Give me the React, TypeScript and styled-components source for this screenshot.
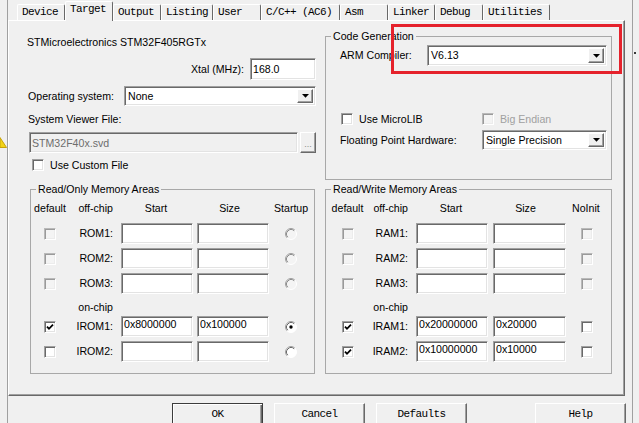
import React from "react";
import styled, { createGlobalStyle, css } from "styled-components";

const GlobalStyle = createGlobalStyle`
  *, *::before, *::after { box-sizing: border-box; }
  html, body { margin: 0; padding: 0; background: #f0f0f0; }
  body {
    font-family: "Liberation Sans", Arial, sans-serif;
    font-size: 10.6px;
    line-height: 13px;
    color: #000;
  }
`;

const sunken = css`
  border: 1px solid;
  border-color: #a0a0a0 #ffffff #ffffff #a0a0a0;
  box-shadow: inset 1px 1px 0 #696969, inset -1px -1px 0 #e3e3e3;
`;

const raised = css`
  border: 1px solid;
  border-color: #ffffff #696969 #696969 #ffffff;
  box-shadow: inset -1px -1px 0 #a0a0a0;
`;

const monoFace = css`
  font-family: "Liberation Mono", "Courier New", monospace;
  font-size: 11px;
  letter-spacing: -0.6px;
`;

const Screen = styled.div`
  position: relative;
  width: 639px;
  height: 423px;
  overflow: hidden;
  display: flex;
  background: #f0f0f0;
`;

const ParentEdge = styled.div`
  width: 7px;
  flex: none;
  padding-top: 137px;
  overflow: hidden;
`;

const Dialog = styled.div`
  width: 626px;
  flex: none;
  display: flex;
  flex-direction: column;
  border-left: 1px solid #a0a0a0;
  border-right: 1px solid #a0a0a0;
`;

const OuterStrip = styled.div`
  flex: 1;
  padding: 52px 0 0 1px;
`;

const Speck = styled.div`
  width: 2px;
  height: 2px;
  background: #3a3a3a;
`;

const TabStrip = styled.div`
  display: flex;
  align-items: flex-start;
  height: 20px;
  padding-left: 9px;
  position: relative;
  z-index: 2;
`;

const Tab = styled.div<{ $active?: boolean; $w: number }>`
  ${monoFace}
  flex: none;
  width: ${(p) => p.$w}px;
  height: 16px;
  margin-top: 4px;
  padding: 1px 0 0 4px;
  line-height: 13px;
  white-space: pre;
  border-top: 1px solid #ffffff;
  border-left: 1px solid #ffffff;
  border-right: 1px solid #696969;
  border-radius: 2px 2px 0 0;
  background: #f0f0f0;
  ${(p) =>
    p.$active &&
    css`
      margin-top: 1px;
      height: 20px;
    `}
`;

const Panel = styled.div`
  width: 617px;
  height: 376px;
  flex: none;
  display: flex;
  align-items: flex-start;
  gap: 9px;
  padding-left: 18px;
  border-top: 1px solid #ffffff;
  border-left: 1px solid #ffffff;
  border-right: 1px solid #696969;
  border-bottom: 1px solid #696969;
  box-shadow: inset -1px -1px 0 #a0a0a0;
`;

const Column = styled.div<{ $w: number }>`
  width: ${(p) => p.$w}px;
  flex: none;
  display: flex;
  flex-direction: column;
`;

const DeviceName = styled.div`
  margin-top: 15px;
  white-space: nowrap;
`;

const XtalRow = styled.div`
  margin-top: 9px;
  height: 22px;
  display: flex;
  justify-content: flex-end;
  align-items: center;
  gap: 6px;
`;

const LineRow = styled.div<{ $mt: number; $h: number; $pl?: number }>`
  margin-top: ${(p) => p.$mt}px;
  height: ${(p) => p.$h}px;
  padding-left: ${(p) => p.$pl ?? 0}px;
  display: flex;
  align-items: center;
`;

const FieldLabel = styled.span<{ $w?: number }>`
  flex: none;
  width: ${(p) => (p.$w ? `${p.$w}px` : "auto")};
  white-space: nowrap;
`;

const Caption = styled.div<{ $mt: number }>`
  margin-top: ${(p) => p.$mt}px;
  padding-left: 1px;
  white-space: nowrap;
`;

const Edit = styled.input<{ $w?: number; $h: number; $top?: boolean; $disabled?: boolean }>`
  ${sunken}
  width: ${(p) => (p.$w ? `${p.$w}px` : "auto")};
  ${(p) => !p.$w && "flex: 1; min-width: 0;"}
  height: ${(p) => p.$h}px;
  margin: 0;
  padding: ${(p) => (p.$top ? "0 2px 6px 2px" : "0 2px")};
  font: inherit;
  line-height: 13px;
  color: ${(p) => (p.$disabled ? "#6d6d6d" : "#000")};
  background: ${(p) => (p.$disabled ? "#f0f0f0" : "#ffffff")};
  outline: none;
`;

const BrowseBtn = styled.span`
  ${raised}
  flex: none;
  width: 16px;
  height: 21px;
  margin-left: 2px;
  display: flex;
  align-items: flex-end;
  justify-content: center;
  padding-bottom: 3px;
  font-size: 9px;
  line-height: 9px;
  color: #8a8a8a;
  background: #f0f0f0;
`;

const Combo = styled.div<{ $h: number }>`
  ${sunken}
  flex: 1;
  min-width: 0;
  height: ${(p) => p.$h}px;
  display: flex;
  align-items: stretch;
  padding: 2px 2px 2px 3px;
  background: #ffffff;
`;

const ComboValue = styled.span`
  flex: 1;
  display: flex;
  align-items: center;
  white-space: nowrap;
`;

const DropButton = styled.span`
  ${raised}
  flex: none;
  width: 16px;
  display: flex;
  align-items: center;
  justify-content: center;
  background: #f0f0f0;
`;

const CheckLabel = styled.span<{ $disabled?: boolean }>`
  white-space: nowrap;
  color: ${(p) => (p.$disabled ? "#a0a0a0" : "#000")};
`;

const Box = styled.span<{ $disabled?: boolean }>`
  ${sunken}
  flex: none;
  width: 12px;
  height: 12px;
  display: inline-flex;
  align-items: center;
  justify-content: center;
  background: ${(p) => (p.$disabled ? "#f4f4f4" : "#ffffff")};
  ${(p) =>
    p.$disabled &&
    css`
      border-color: #b9b9b9 #ffffff #ffffff #b9b9b9;
      box-shadow: inset 1px 1px 0 #9a9a9a, inset -1px -1px 0 #ececec;
    `}
`;

const Group = styled.fieldset<{ $mt: number; $ml?: number; $w: number }>`
  margin: ${(p) => p.$mt}px 0 0 ${(p) => p.$ml ?? 0}px;
  width: ${(p) => p.$w}px;
  min-width: 0;
  padding: 0;
  border: 1px solid #a8a8a8;
`;

const GroupTitle = styled.legend`
  margin-left: 5px;
  padding: 0 2px;
  line-height: 13px;
  white-space: nowrap;
`;

const CodeGenBody = styled.div`
  padding: 0 4px 29px 14px;
  display: flex;
  flex-direction: column;
`;

const SplitRow = styled.div<{ $mt: number; $h: number }>`
  margin-top: ${(p) => p.$mt}px;
  height: ${(p) => p.$h}px;
  display: flex;
  align-items: center;
`;

const CheckPair = styled.div<{ $w?: number; $pl?: number }>`
  flex: none;
  width: ${(p) => (p.$w ? `${p.$w}px` : "auto")};
  padding-left: ${(p) => p.$pl ?? 0}px;
  display: flex;
  align-items: center;
  gap: 6px;
`;

const MemTable = styled.div`
  display: flex;
  flex-direction: column;
  padding-bottom: 9px;
`;

const MemRow = styled.div<{ $cols: string; $h: number }>`
  display: grid;
  grid-template-columns: ${(p) => p.$cols};
  height: ${(p) => p.$h}px;
  align-items: center;
`;

const OnChipRow = styled(MemRow)`
  align-items: end;
`;

const HeadCell = styled.div<{ $align: "center" | "left" | "right"; $pl?: number; $pr?: number }>`
  text-align: ${(p) => p.$align};
  padding-left: ${(p) => p.$pl ?? 0}px;
  padding-right: ${(p) => p.$pr ?? 0}px;
  white-space: nowrap;
`;

const CenterCell = styled.div`
  display: flex;
  justify-content: center;
`;

const LabelCell = styled.div`
  grid-column: 2;
  text-align: right;
  padding-right: 4px;
  white-space: nowrap;
`;

const EditCell = styled.div<{ $pl: number }>`
  display: flex;
  padding-left: ${(p) => p.$pl}px;
`;

const TailCell = styled.div<{ $pl: number }>`
  display: flex;
  padding-left: ${(p) => p.$pl}px;
`;

const Footer = styled.div`
  display: flex;
  padding: 7px 0 0 164px;
  gap: 11px;
`;

const DlgButton = styled.button<{ $default?: boolean; $ml?: number }>`
  ${raised}
  ${monoFace}
  flex: none;
  width: 91px;
  height: 23px;
  margin: 0 0 0 ${(p) => p.$ml ?? 0}px;
  padding: 0;
  line-height: 13px;
  color: #000;
  background: #f0f0f0;
  ${(p) =>
    p.$default &&
    css`
      border: 1px solid #3c3c3c;
      box-shadow: inset 1px 1px 0 #ffffff, inset -1px -1px 0 #696969, inset -2px -2px 0 #a0a0a0;
    `}
`;

const Annotation = styled.div`
  position: absolute;
  left: 391px;
  top: 24px;
  width: 231px;
  height: 50px;
  border: 3px solid #e5222c;
  pointer-events: none;
`;

/* ---------- small drawn widgets ---------- */

const Arrow = () => (
  <svg width="7" height="4" viewBox="0 0 7 4">
    <polygon points="0,0 7,0 3.5,3.8" fill="#000" />
  </svg>
);

const Checkbox = ({ checked, disabled }: { checked?: boolean; disabled?: boolean }) => (
  <Box $disabled={disabled}>
    {checked && (
      <svg width="8" height="8" viewBox="0 0 8 8">
        <polyline points="1,3.6 3,5.8 7,1.6" fill="none" stroke="#000" strokeWidth="1.8" />
      </svg>
    )}
  </Box>
);

const Radio = ({ checked, disabled }: { checked?: boolean; disabled?: boolean }) => (
  <svg width="12" height="12" viewBox="0 0 12 12">
    <circle cx="6" cy="6" r="5.5" fill={disabled ? "#f4f4f4" : "#ffffff"} />
    <path d="M2.11 9.89 A5.5 5.5 0 0 1 9.89 2.11" fill="none" stroke="#a0a0a0" />
    <path d="M2.82 9.18 A4.5 4.5 0 0 1 9.18 2.82" fill="none" stroke={disabled ? "#8c8c8c" : "#696969"} />
    <path d="M9.89 2.11 A5.5 5.5 0 0 1 2.11 9.89" fill="none" stroke="#ffffff" />
    {checked && <circle cx="6" cy="6" r="1.7" fill="#000" />}
  </svg>
);

const Warning = () => (
  <svg width="7" height="11" viewBox="0 0 7 11">
    <polygon points="0,0.5 6.5,10.5 0,10.5" fill="#f3d417" stroke="#c7a20a" strokeWidth="1" />
  </svg>
);

/* ---------- data ---------- */

const tabs = [
  { t: "Device", w: 48 },
  { t: "Target", w: 48, active: true },
  { t: "Output", w: 48 },
  { t: "Listing", w: 52 },
  { t: "User", w: 48 },
  { t: "C/C++ (AC6)", w: 79 },
  { t: "Asm", w: 48 },
  { t: "Linker", w: 47 },
  { t: "Debug", w: 48 },
  { t: "Utilities", w: 67 },
];

type MemItem = {
  label: string;
  def: boolean;
  defDisabled?: boolean;
  start: string;
  size: string;
  tailOn?: boolean;
  tailDisabled?: boolean;
};

const romOff: MemItem[] = [
  { label: "ROM1:", def: false, defDisabled: true, start: "", size: "", tailDisabled: true },
  { label: "ROM2:", def: false, defDisabled: true, start: "", size: "", tailDisabled: true },
  { label: "ROM3:", def: false, defDisabled: true, start: "", size: "", tailDisabled: true },
];
const romOn: MemItem[] = [
  { label: "IROM1:", def: true, start: "0x8000000", size: "0x100000", tailOn: true },
  { label: "IROM2:", def: false, start: "", size: "" },
];
const ramOff: MemItem[] = [
  { label: "RAM1:", def: false, defDisabled: true, start: "", size: "", tailDisabled: true },
  { label: "RAM2:", def: false, defDisabled: true, start: "", size: "", tailDisabled: true },
  { label: "RAM3:", def: false, defDisabled: true, start: "", size: "", tailDisabled: true },
];
const ramOn: MemItem[] = [
  { label: "IRAM1:", def: true, start: "0x20000000", size: "0x20000" },
  { label: "IRAM2:", def: true, start: "0x10000000", size: "0x10000" },
];

type MemLayout = {
  cols: string;
  sizePl: number;
  sizeW: number;
  tailHead: string;
  tailHeadPl: number;
  tailPl: number;
  radio: boolean;
};

const romLayout: MemLayout = {
  cols: "38px 48px 78px 76px 1fr",
  sizePl: 2,
  sizeW: 72,
  tailHead: "Startup",
  tailHeadPl: 3,
  tailPl: 14,
  radio: true,
};

const ramLayout: MemLayout = {
  cols: "43px 43px 78px 78px 1fr",
  sizePl: 3,
  sizeW: 73,
  tailHead: "NoInit",
  tailHeadPl: 4,
  tailPl: 13,
  radio: false,
};

const MemLine = ({ item, lay }: { item: MemItem; lay: MemLayout }) => (
  <MemRow $cols={lay.cols} $h={25}>
    <CenterCell>
      <Checkbox checked={item.def} disabled={item.defDisabled} />
    </CenterCell>
    <LabelCell>{item.label}</LabelCell>
    <EditCell $pl={4}>
      <Edit $w={72} $h={21} $top readOnly value={item.start} />
    </EditCell>
    <EditCell $pl={lay.sizePl}>
      <Edit $w={lay.sizeW} $h={21} $top readOnly value={item.size} />
    </EditCell>
    <TailCell $pl={lay.tailPl}>
      {lay.radio ? (
        <Radio checked={item.tailOn} disabled={item.tailDisabled} />
      ) : (
        <Checkbox checked={item.tailOn} disabled={item.tailDisabled} />
      )}
    </TailCell>
  </MemRow>
);

const MemoryGroup = ({
  title,
  lay,
  off,
  on,
  ml,
  w,
}: {
  title: string;
  lay: MemLayout;
  off: MemItem[];
  on: MemItem[];
  ml: number;
  w: number;
}) => (
  <Group $mt={0} $ml={ml} $w={w}>
    <GroupTitle>{title}</GroupTitle>
    <MemTable>
      <MemRow $cols={lay.cols} $h={25}>
        <HeadCell $align="center">default</HeadCell>
        <HeadCell $align="right" $pr={4}>
          off-chip
        </HeadCell>
        <HeadCell $align="center">Start</HeadCell>
        <HeadCell $align="center" $pr={7}>
          Size
        </HeadCell>
        <HeadCell $align="left" $pl={lay.tailHeadPl}>
          {lay.tailHead}
        </HeadCell>
      </MemRow>
      {off.map((it) => (
        <MemLine key={it.label} item={it} lay={lay} />
      ))}
      <OnChipRow $cols={lay.cols} $h={18}>
        <LabelCell>on-chip</LabelCell>
      </OnChipRow>
      {on.map((it) => (
        <MemLine key={it.label} item={it} lay={lay} />
      ))}
    </MemTable>
  </Group>
);

const SpacedGroupWrap = styled.div<{ $mt: number }>`
  margin-top: ${(p) => p.$mt}px;
  display: flex;
`;

export default function App() {
  return (
    <>
      <GlobalStyle />
      <Screen>
        <ParentEdge>
          <Warning />
        </ParentEdge>
        <Dialog>
          <TabStrip>
            {tabs.map((t) => (
              <Tab key={t.t} $w={t.w} $active={t.active}>
                {t.t}
              </Tab>
            ))}
          </TabStrip>
          <Panel>
            <Column $w={289}>
              <DeviceName>STMicroelectronics STM32F405RGTx</DeviceName>
              <XtalRow>
                <FieldLabel>Xtal (MHz):</FieldLabel>
                <Edit $w={66} $h={22} readOnly value="168.0" />
              </XtalRow>
              <LineRow $mt={6} $h={20} $pl={1}>
                <FieldLabel $w={96}>Operating system:</FieldLabel>
                <Combo $h={20}>
                  <ComboValue>None</ComboValue>
                  <DropButton>
                    <Arrow />
                  </DropButton>
                </Combo>
              </LineRow>
              <Caption $mt={7}>System Viewer File:</Caption>
              <LineRow $mt={6} $h={21} $pl={2}>
                <Edit $h={21} $disabled readOnly value="STM32F40x.svd" />
                <BrowseBtn>...</BrowseBtn>
              </LineRow>
              <LineRow $mt={6} $h={12} $pl={5}>
                <CheckPair>
                  <Checkbox />
                  <CheckLabel>Use Custom File</CheckLabel>
                </CheckPair>
              </LineRow>
              <SpacedGroupWrap $mt={12}>
                <MemoryGroup
                  title="Read/Only Memory Areas"
                  lay={romLayout}
                  off={romOff}
                  on={romOn}
                  ml={3}
                  w={285}
                />
              </SpacedGroupWrap>
            </Column>
            <Column $w={287}>
              <Group $mt={9} $w={287}>
                <GroupTitle>Code Generation</GroupTitle>
                <CodeGenBody>
                  <SplitRow $mt={2} $h={21}>
                    <FieldLabel $w={87}>ARM Compiler:</FieldLabel>
                    <Combo $h={21}>
                      <ComboValue>V6.13</ComboValue>
                      <DropButton>
                        <Arrow />
                      </DropButton>
                    </Combo>
                  </SplitRow>
                  <SplitRow $mt={47} $h={12}>
                    <CheckPair $w={142} $pl={1}>
                      <Checkbox />
                      <CheckLabel>Use MicroLIB</CheckLabel>
                    </CheckPair>
                    <CheckPair>
                      <Checkbox disabled />
                      <CheckLabel $disabled>Big Endian</CheckLabel>
                    </CheckPair>
                  </SplitRow>
                  <SplitRow $mt={5} $h={20}>
                    <FieldLabel $w={142}>Floating Point Hardware:</FieldLabel>
                    <Combo $h={20}>
                      <ComboValue>Single Precision</ComboValue>
                      <DropButton>
                        <Arrow />
                      </DropButton>
                    </Combo>
                  </SplitRow>
                </CodeGenBody>
              </Group>
              <SpacedGroupWrap $mt={3}>
                <MemoryGroup
                  title="Read/Write Memory Areas"
                  lay={ramLayout}
                  off={ramOff}
                  on={ramOn}
                  ml={0}
                  w={287}
                />
              </SpacedGroupWrap>
            </Column>
          </Panel>
          <Footer>
            <DlgButton $default>OK</DlgButton>
            <DlgButton>Cancel</DlgButton>
            <DlgButton>Defaults</DlgButton>
            <DlgButton $ml={57}>Help</DlgButton>
          </Footer>
        </Dialog>
        <OuterStrip>
          <Speck />
        </OuterStrip>
        <Annotation />
      </Screen>
    </>
  );
}
